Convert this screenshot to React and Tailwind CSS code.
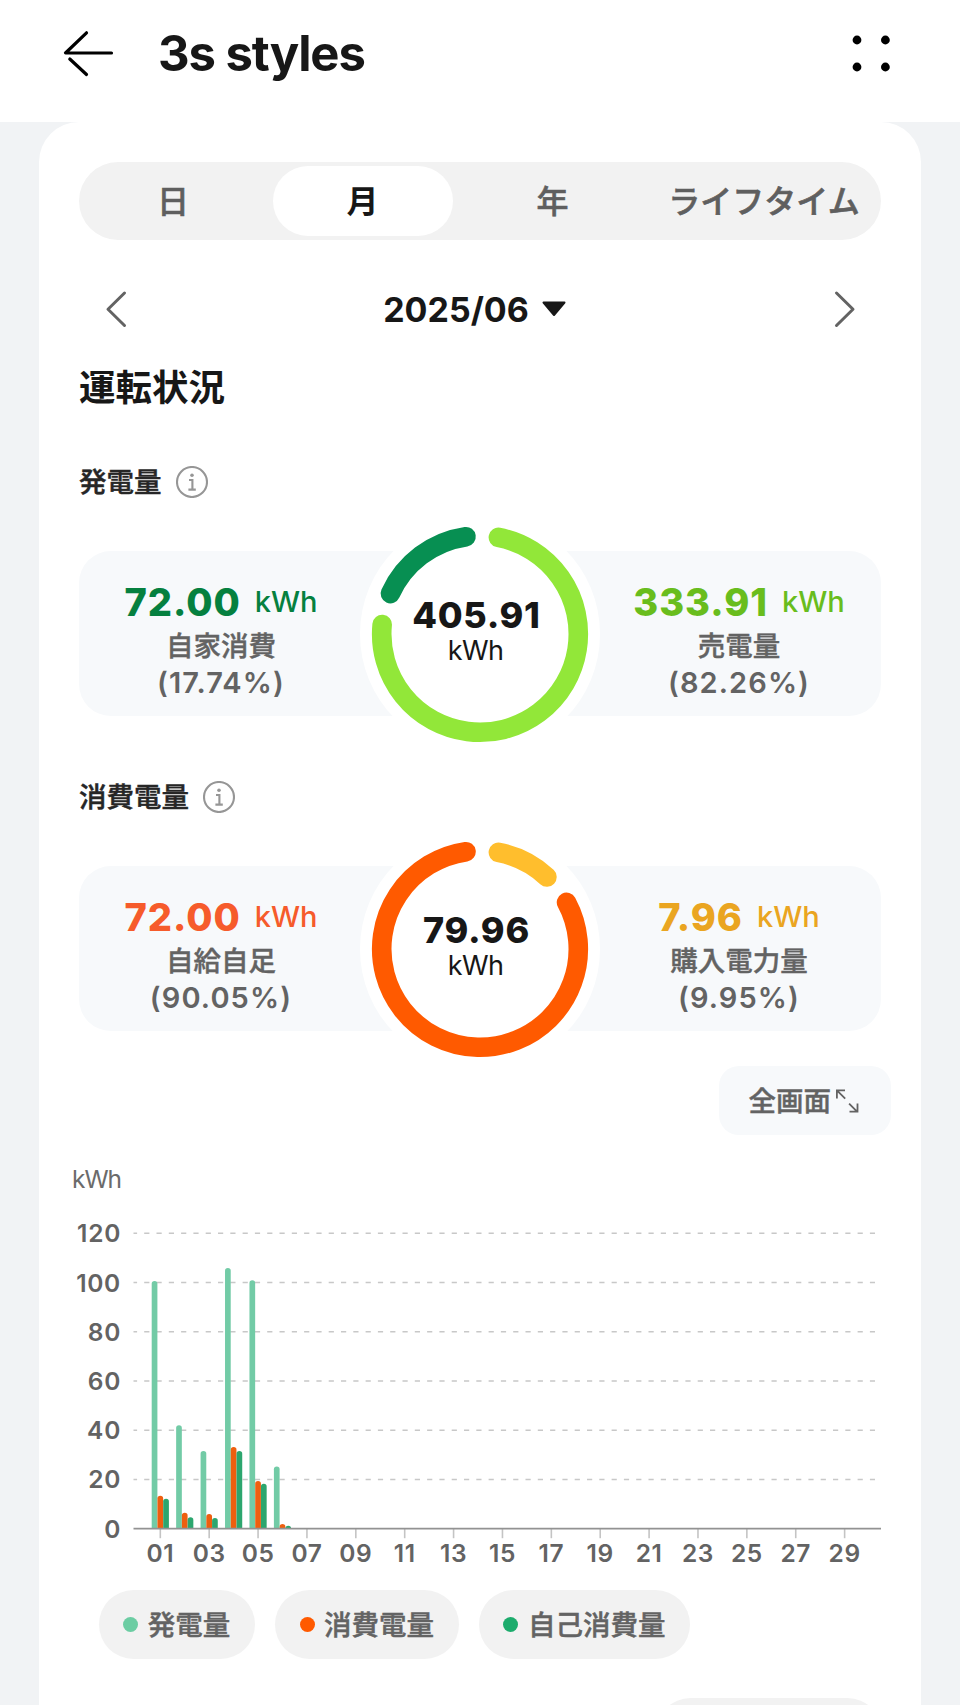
import React, { useState } from 'react'

const RING_RADIUS = 98.3

const tabs = [
    { id: 'day', label: '日' },
    { id: 'month', label: '月' },
    { id: 'year', label: '年' },
    { id: 'lifetime', label: 'ライフタイム' },
]

const days = [
    { day: 1, produced: 100.6, consumed: 13.4, self: 12.2 },
    { day: 2, produced: 42, consumed: 6.5, self: 4.7 },
    { day: 3, produced: 31.6, consumed: 6, self: 4.3 },
    { day: 4, produced: 105.9, consumed: 33.2, self: 31.6 },
    { day: 5, produced: 100.9, consumed: 19.4, self: 18.3 },
    { day: 6, produced: 25.3, consumed: 1.9, self: 1.2 },
]

const legend = [
    { label: '発電量', dot: 'bg-[#6ccda3]' },
    { label: '消費電量', dot: 'bg-[#ff5a00]' },
    { label: '自己消費量', dot: 'bg-[#1dac6d]' },
]

// angles are clockwise degrees from twelve o'clock
const arcPath = (from, to) => {
    const point = (deg) => {
        const rad = (deg * Math.PI) / 180
        return `${120 + RING_RADIUS * Math.sin(rad)} ${120 - RING_RADIUS * Math.cos(rad)}`
    }
    return `M ${point(from)} A ${RING_RADIUS} ${RING_RADIUS} 0 ${to - from > 180 ? 1 : 0} 1 ${point(to)}`
}

const InfoIcon = () => (
    <svg className="h-8 w-8" viewBox="0 0 32 32" fill="none" stroke="#969696" strokeWidth="2.1">
        <circle cx="16" cy="16" r="15" />
        <circle cx="16" cy="9.3" r="1.8" fill="#969696" stroke="none" />
        <path d="M13 14h3.4v9.4M12.4 23.6h7.4" />
    </svg>
)

const SectionLabel = ({ children }) => (
    <div className="flex h-8 items-center gap-[14px] text-[27.5px] font-medium text-[#262626]">
        <span className="pt-px [-webkit-text-stroke:0.45px]">{children}</span>
        <InfoIcon />
    </div>
)

const Side = ({ value, label, percent, color }) => (
    <div className="flex w-[284px] flex-col items-center self-start pt-[28px]">
        <div className={`flex items-center gap-[14px] ${color}`}>
            <span className="text-[38px] leading-[46px] font-extrabold tracking-[1px]">{value}</span>
            <span className="text-[29px] leading-[46px] font-medium">kWh</span>
        </div>
        <span className="mt-px text-[27.5px] leading-[40px] font-medium text-[#636363] [-webkit-text-stroke:0.4px]">{label}</span>
        <span className="text-[29px] leading-[34px] font-semibold tracking-[1.1px] text-[#636363]">({percent}%)</span>
    </div>
)

const EnergyPanel = ({ total, left, right, arcs }) => (
    <div className="flex h-[165px] items-center justify-between rounded-[32px] bg-[#f7f9fb]">
        <Side {...left} />
        <div className="relative -mx-8 -my-10 h-[240px] w-[240px] shrink-0 rounded-full bg-white">
            <svg className="h-full w-full" viewBox="0 0 240 240" fill="none" strokeWidth="19.6" strokeLinecap="round">
                {arcs.map((arc) => (
                    <path key={arc.from} d={arcPath(arc.from, arc.to)} stroke={arc.stroke} />
                ))}
            </svg>
            <div className="absolute inset-0 flex flex-col items-center pt-[80px] pr-[7px] text-[#171717]">
                <span className="text-[36px] leading-[42px] font-extrabold tracking-[0.7px]">{total}</span>
                <span className="pr-[2px] text-[27px] leading-[30px] tracking-[-0.6px]">kWh</span>
            </div>
        </div>
        <Side {...right} />
    </div>
)

const DailyChart = () => {
    const base = 393.7
    const unit = 2.4617
    const dayX = (day) => 91.3 + (day - 1) * 24.44
    const bar = (x, value, fill) => {
        const h = value * unit
        const r = Math.min(2.8, h)
        return <path d={`M${x} ${base}v${-(h - r)}a2.85 ${r} 0 0 1 5.7 0v${h - r}z`} fill={fill} />
    }
    return (
        <svg className="-mx-2.5 h-[440px] w-[822px]" viewBox="0 0 822 440">
            <text x="3" y="53" fontSize="24.5" letterSpacing="-1" fill="#6b6b6b">kWh</text>
            <g fontSize="24.5" fontWeight="600" fill="#636363" letterSpacing="0.7">
                {[0, 20, 40, 60, 80, 100, 120].map((v) => (
                    <text key={v} x="52" y={base - v * unit + 9} textAnchor="end">{v}</text>
                ))}
            </g>
            {[20, 40, 60, 80, 100, 120].map((v) => (
                <line key={v} x1="64.5" x2="806" y1={base - v * unit} y2={base - v * unit} stroke="#c8c8c8" strokeWidth="1.6" strokeDasharray="5.2 7.1" strokeDashoffset="1.6" />
            ))}
            {Array.from({ length: 15 }, (_, i) => i * 2 + 1).map((day) => (
                <g key={day}>
                    <line x1={dayX(day)} x2={dayX(day)} y1={base} y2={base + 9.5} stroke="#c4c4c4" strokeWidth="1.6" />
                    <text x={dayX(day)} y="427.3" textAnchor="middle" fontSize="24.5" fontWeight="600" fill="#636363" letterSpacing="0.6">
                        {String(day).padStart(2, '0')}
                    </text>
                </g>
            ))}
            {days.map((d) => (
                <g key={d.day}>
                    {bar(dayX(d.day) - 8.6, d.produced, '#72cba6')}
                    {bar(dayX(d.day) - 2.85, d.consumed, '#ee5f0f')}
                    {bar(dayX(d.day) + 2.9, d.self, '#2ca66e')}
                </g>
            ))}
            <line x1="64.5" x2="812" y1={base} y2={base} stroke="#929292" strokeWidth="1.7" />
        </svg>
    )
}

const App = () => {
    const [activeTab, setActiveTab] = useState('month')

    return (
        <div className="h-[1705px] w-[960px] overflow-hidden bg-[#f1f3f5] font-[Inter,'Noto_Sans_CJK_JP',sans-serif] text-[#171717]">
            <header className="flex h-[122px] items-center bg-white pb-3.5 pl-[62px] pr-[68px]">
                <svg className="h-[50px] w-[54px]" viewBox="0 0 54 50" fill="none" stroke="#000" strokeWidth="3.2" strokeLinecap="round">
                    <path d="M24.5 3.8 3.5 24H49.5" strokeLinejoin="round" />
                    <path d="M7.8 30 24.5 45.5" />
                </svg>
                <h1 className="ml-[42px] text-[49px] font-bold tracking-[-1.1px]">3s styles</h1>
                <svg className="ml-auto h-10 w-10" viewBox="0 0 40 40">
                    <circle cx="5" cy="6" r="4.4" />
                    <circle cx="33.4" cy="6" r="4.4" />
                    <circle cx="5" cy="33" r="4.4" />
                    <circle cx="33.4" cy="33" r="4.4" />
                </svg>
            </header>

            <main className="mx-[39px] rounded-t-[40px] bg-white px-10 pt-10">
                <div className="grid h-[78px] grid-cols-[189px_190px_190px_233px] items-center rounded-full bg-[#f2f2f2]">
                    {tabs.map((tab) => (
                        <button
                            key={tab.id}
                            type="button"
                            onClick={() => setActiveTab(tab.id)}
                            className={`mx-[5px] h-[70px] rounded-full pt-[2px] pr-px text-[32px] whitespace-nowrap ${activeTab === tab.id ? 'bg-white font-bold text-[#171717]' : 'font-medium text-[#5f5f5f] [-webkit-text-stroke:0.6px]'}`}
                        >
                            {tab.label}
                        </button>
                    ))}
                </div>

                <div className="mt-9 flex h-[66px] items-center justify-between pr-[25px] pl-[26px]">
                    <svg className="h-10 w-6" viewBox="0 0 24 40" fill="none" stroke="#636363" strokeWidth="3" strokeLinecap="round" strokeLinejoin="round">
                        <path d="M19.5 4 3 20.3 19.5 36.5" />
                    </svg>
                    <div className="flex items-center gap-[13px] pr-[12px]">
                        <span className="text-[34px] font-bold">2025/06</span>
                        <svg className="h-4 w-6" viewBox="0 0 24 16" fill="#171717" stroke="#171717" strokeWidth="2" strokeLinejoin="round">
                            <path d="M1.5 1.5h21L12 14z" />
                        </svg>
                    </div>
                    <svg className="h-10 w-6" viewBox="0 0 24 40" fill="none" stroke="#636363" strokeWidth="3" strokeLinecap="round" strokeLinejoin="round">
                        <path d="M4.5 4 21 20.3 4.5 36.5" />
                    </svg>
                </div>

                <h2 className="mt-6 text-[36.5px] leading-[44px] font-bold">運転状況</h2>

                <div className="mt-14 flex flex-col gap-[53px]">
                    <SectionLabel>発電量</SectionLabel>
                    <EnergyPanel
                        total="405.91"
                        left={{ value: '72.00', label: '自家消費', percent: '17.74', color: 'text-[#05803f]' }}
                        right={{ value: '333.91', label: '売電量', percent: '82.26', color: 'text-[#69bd1d]' }}
                        arcs={[
                            { from: 10.8, to: 275.5, stroke: '#92e739' },
                            { from: 294.3, to: 351.8, stroke: '#078f52' },
                        ]}
                    />
                </div>

                <div className="mt-[65px] flex flex-col gap-[53px]">
                    <SectionLabel>消費電量</SectionLabel>
                    <EnergyPanel
                        total="79.96"
                        left={{ value: '72.00', label: '自給自足', percent: '90.05', color: 'text-[#f65b2b]' }}
                        right={{ value: '7.96', label: '購入電力量', percent: '9.95', color: 'text-[#eaa521]' }}
                        arcs={[
                            { from: 10.8, to: 42.9, stroke: '#ffbe2d' },
                            { from: 61.7, to: 351.8, stroke: '#ff5a00' },
                        ]}
                    />
                </div>

                <div className="-mr-2.5 mt-[35px] flex justify-end">
                    <button type="button" className="flex h-[69px] w-[172px] items-center rounded-[20px] bg-[#f7f9fb] pt-px pl-[29.5px] text-[27.5px] font-medium text-[#636363]">
                        <span className="pt-px [-webkit-text-stroke:0.45px]">全画面</span>
                        <svg className="ml-1 h-6 w-6" viewBox="0 0 24 24" fill="none" stroke="#636363" strokeWidth="1.8">
                            <path d="M10 1.4H1.9V9.5M1.9 1.4l8.3 8.3M14.5 22.6h8V14.5M22.1 22.6l-8-8" />
                        </svg>
                    </button>
                </div>

                <DailyChart />

                <div className="mt-[15px] flex gap-5 pl-5">
                    {legend.map((item) => (
                        <div key={item.label} className="flex h-[69px] items-center gap-[9.5px] rounded-full bg-[#f2f2f2] pr-[25px] pl-[24.3px] text-[27.5px] font-medium text-[#636363]">
                            <span className={`h-[15px] w-[15px] rounded-full ${item.dot}`}></span>
                            <span className="pt-[2px] [-webkit-text-stroke:0.45px]">{item.label}</span>
                        </div>
                    ))}
                </div>

                <div className="-mr-px mt-[39px] flex justify-end">
                    <div className="h-[69px] w-[226px] rounded-full bg-[#f2f2f2]"></div>
                </div>
            </main>
        </div>
    )
}

export default App
